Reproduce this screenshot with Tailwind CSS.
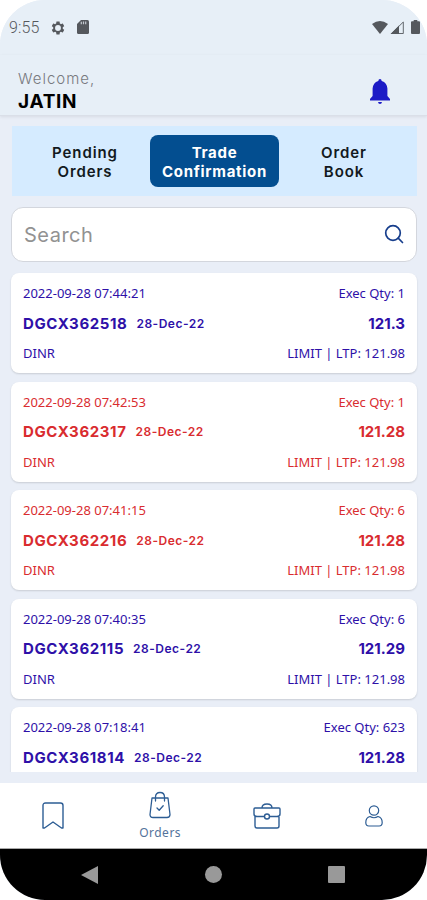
<!DOCTYPE html>
<html lang="en">
<head>
    <meta charset="UTF-8">
    <meta name="viewport" content="width=device-width, initial-scale=1.0">
    <title>Trade Confirmation</title>
    <script src="https://cdn.jsdelivr.net/npm/@tailwindcss/browser@4"></script>
</head>
<body class="bg-white font-['Inter',sans-serif]">
    <div class="w-[427px] h-[900px] rounded-[45px] overflow-hidden bg-[#e9eef7] flex flex-col">

        <!-- Status bar -->
        <div class="h-[55px] shrink-0 flex items-center pl-[9px] pr-[7px] bg-[#e7eff7] text-[#55585d]">
            <span class="font-['Roboto',sans-serif] text-base font-light w-[42px] tracking-[0.1px]">9:55</span>
            <svg class="size-4 -ml-[1px]" viewBox="0 0 24 24" fill="currentColor"><path d="M19.14 12.94c.04-.3.06-.61.06-.94 0-.32-.02-.64-.07-.94l2.03-1.58c.18-.14.23-.41.12-.61l-1.92-3.32c-.12-.22-.37-.29-.59-.22l-2.39.96c-.5-.38-1.03-.7-1.62-.94l-.36-2.54c-.04-.24-.24-.41-.48-.41h-3.84c-.24 0-.43.17-.47.41l-.36 2.54c-.59.24-1.13.57-1.62.94l-2.39-.96c-.22-.08-.47 0-.59.22L2.74 8.87c-.12.21-.08.47.12.61l2.03 1.58c-.05.3-.09.63-.09.94s.02.64.07.94l-2.03 1.58c-.18.14-.23.41-.12.61l1.92 3.32c.12.22.37.29.59.22l2.39-.96c.5.38 1.03.7 1.62.94l.36 2.54c.05.24.24.41.48.41h3.84c.24 0 .44-.17.47-.41l.36-2.54c.59-.24 1.13-.56 1.62-.94l2.39.96c.22.08.47 0 .59-.22l1.92-3.32c.12-.22.07-.47-.12-.61zM12 16.4a4.4 4.4 0 1 1 0-8.8 4.4 4.4 0 0 1 0 8.8z"/></svg>
            <svg class="w-3 h-[14px] ml-[11px] mb-px" viewBox="0 0 12 14"><path d="M4 0h6.500Q12 0 12 1.500v11Q12 14 10.500 14h-9Q0 14 0 12.500V4z" fill="currentColor"/><path d="M4.300 1.800v2.500M6.500 1.500v2.800M8.700 1.500v2.800" stroke="#c3c8d0" stroke-width="1.200"/></svg>
            <svg class="w-4 h-[13px] ml-auto mb-px" viewBox="0 0 16 13" fill="currentColor"><path d="M0 3Q8-3 16 3L8 13z"/></svg>
            <svg class="w-[14px] h-[13px] ml-[2px]" viewBox="0 0 14 13"><path d="M.5 13 9 4.500V13z" fill="currentColor"/><path d="M1.500 12.500 13.300 1v11.500z" fill="none" stroke="currentColor" stroke-width=".9"/></svg>
            <svg class="w-[9px] h-[14px] ml-[7px] mb-px" viewBox="0 0 9 14" fill="currentColor"><path d="M2.700 0h3.600v1.300H8q1 0 1 1V13q0 1-1 1H1q-1 0-1-1V2.300q0-1 1-1h1.700z"/></svg>
        </div>

        <!-- Header -->
        <header class="h-[61px] shrink-0 flex justify-between pl-[18px] pr-9 bg-[#e7eff7] border-b border-[#dadfe8] shadow-[0_1px_3px_rgba(0,0,0,0.08)]">
            <div class="pt-[14px]">
                <p class="text-[15px] leading-[19px] font-light text-[#77797e] tracking-[1px]">Welcome,</p>
                <h1 class="text-[19px] leading-[28px] font-bold text-black tracking-[0.7px]">JATIN</h1>
            </div>
            <svg class="w-[22px] h-[26px] mt-[24px]" viewBox="0 0 22 26" fill="#1c1bc6"><path d="M11 0q1.500 0 1.700 1.900Q18 3.600 18.400 9.500V17l2.600 3v1.500H1V20l2.600-3V9.500Q4 3.600 9.300 1.900 9.500 0 11 0zM9 23h4q-.3 2-2 2t-2-2z"/></svg>
        </header>

        <!-- Tabs -->
        <nav class="h-[70px] shrink-0 mt-[10px] ml-3 mr-[10px] bg-[#d5ebff] flex items-center pl-[8px] text-center text-[15px] leading-[19px] tracking-[0.9px] font-semibold text-[#121920]">
            <div class="w-[130px] pt-px">Pending<br>Orders</div>
            <div class="w-[129px] h-[52px] bg-[#034e90] text-white tracking-[0.7px] font-bold rounded-lg flex items-center justify-center pt-px">Trade<br>Confirmation</div>
            <div class="w-[130px] pt-px">Order<br>Book</div>
        </nav>

        <!-- Search -->
        <div class="h-[55px] shrink-0 mt-[11px] ml-[11px] mr-[10px] bg-white border border-[#d3d6dd] rounded-xl flex items-center justify-between pl-3 pr-[12px]">
            <span class="text-[20px] text-[#929292] tracking-[0.500px]">Search</span>
            <svg class="size-5 -mt-[2px]" viewBox="0 0 20 20" fill="none" stroke="#173e8c" stroke-width="1.700" stroke-linecap="round"><circle cx="9" cy="9" r="7.300"/><path d="m14.200 14.200 4.300 4.300"/></svg>
        </div>

        <!-- Orders -->
        <main id="orders" class="h-[500px] shrink-0 mt-[10px] pt-px pl-[11px] pr-[10px] flex flex-col gap-[8.600px] overflow-hidden"></main>

        <!-- Bottom navigation -->
        <div class="h-[66px] shrink-0 mt-[11px] bg-white grid grid-cols-4 border-b border-[#a9a9a9] text-[#2d5d94]">
            <div class="flex items-center justify-center">
                <svg class="w-[22px] h-7" viewBox="0 0 22 28" fill="none" stroke="currentColor" stroke-width="1.400" stroke-linejoin="round"><path d="M1 3.500Q1 1 3.500 1h15Q21 1 21 3.500V26h-1.500L11 20l-8.500 6H1z"/></svg>
            </div>
            <div class="flex flex-col items-center pt-2">
                <svg class="w-[22px] h-7" viewBox="0 0 22 28" fill="none" stroke="currentColor" stroke-width="1.300" stroke-linecap="round" stroke-linejoin="round"><path d="M3 7h16l2 16.500q0 3-3 3H4q-3 0-3-3zM6.500 10V6q0-4.500 4.500-4.500T15.500 6v4M8 17l2.200 2.200 4-4.400"/></svg>
                <span class="font-['Noto_Sans',sans-serif] text-[12px] leading-4 mt-[6px] tracking-[0.500px] text-[#53739b]">Orders</span>
            </div>
            <div class="flex items-center justify-center">
                <svg class="w-7 h-7" viewBox="0 0 28 28" fill="none" stroke="currentColor" stroke-width="1.400" stroke-linejoin="round"><path d="M2 14v10q0 2 2 2h20q2 0 2-2V14M2 6h24q1 0 1 1v5q0 2.500-3 2.500h-7M11 14.500H4q-3 0-3-2.500V7q0-1 1-1M9 6q0-4 5-4t5 4"/><circle cx="14" cy="14.500" r="2.500"/></svg>
            </div>
            <div class="flex items-center justify-center">
                <svg class="w-[18px] h-[22px]" viewBox="0 0 18 22" fill="none" stroke="currentColor" stroke-width="1.200"><circle cx="9" cy="5.500" r="4.700"/><path d="M5 11.500q4 2.500 8 0 4.200 1 4.200 6 0 3.500-3 3.500H3.800q-3 0-3-3.500 0-5 4.200-6z"/></svg>
            </div>
        </div>

        <!-- System buttons -->
        <div class="h-[51px] shrink-0 bg-black flex items-center justify-between pl-[81px] pr-[82px] text-[#999]">
            <svg class="w-[17px] h-[18px]" viewBox="0 0 17 18" fill="currentColor"><path d="M0 9 17 0v18z"/></svg>
            <div class="size-[17px] rounded-full bg-[#999]"></div>
            <div class="size-[17px] rounded-[1px] bg-[#999]"></div>
        </div>
    </div>

    <script>
        const orders = [
            { time: "2022-09-28 07:44:21", qty: 1, id: "DGCX362518", price: "121.3", side: "buy", symbol: "DINR", info: "LIMIT | LTP: 121.98" },
            { time: "2022-09-28 07:42:53", qty: 1, id: "DGCX362317", price: "121.28", side: "sell", symbol: "DINR", info: "LIMIT | LTP: 121.98" },
            { time: "2022-09-28 07:41:15", qty: 6, id: "DGCX362216", price: "121.28", side: "sell", symbol: "DINR", info: "LIMIT | LTP: 121.98" },
            { time: "2022-09-28 07:40:35", qty: 6, id: "DGCX362115", price: "121.29", side: "buy", symbol: "DINR", info: "LIMIT | LTP: 121.98" },
            { time: "2022-09-28 07:18:41", qty: 623, id: "DGCX361814", price: "121.28", side: "buy" }
        ];
        const colors = { buy: "text-[#2e10a8]", sell: "text-[#d92c2f]" };

        document.getElementById("orders").innerHTML = orders.map(o => `
            <div class="h-[100px] shrink-0 bg-white rounded-lg shadow-[0_1px_2px_rgba(0,0,0,0.14)] px-3 pt-[10px] font-['Noto_Sans',sans-serif] text-[13px] leading-5 ${colors[o.side]}">
                <div class="flex justify-between"><span>${o.time}</span><span>Exec Qty: ${o.qty}</span></div>
                <div class="flex justify-between items-center h-10 pt-px font-['Inter',sans-serif] font-bold text-[15px]">
                    <div class="flex items-center gap-[9px]"><span class="tracking-[0.600px]">${o.id}</span><span class="text-[12px] font-semibold tracking-[0.500px]">28-Dec-22</span></div>
                    <span>${o.price}</span>
                </div>
                ${o.info ? `<div class="flex justify-between"><span>${o.symbol}</span><span>${o.info}</span></div>` : ""}
            </div>`).join("");
    </script>
</body>
</html>
